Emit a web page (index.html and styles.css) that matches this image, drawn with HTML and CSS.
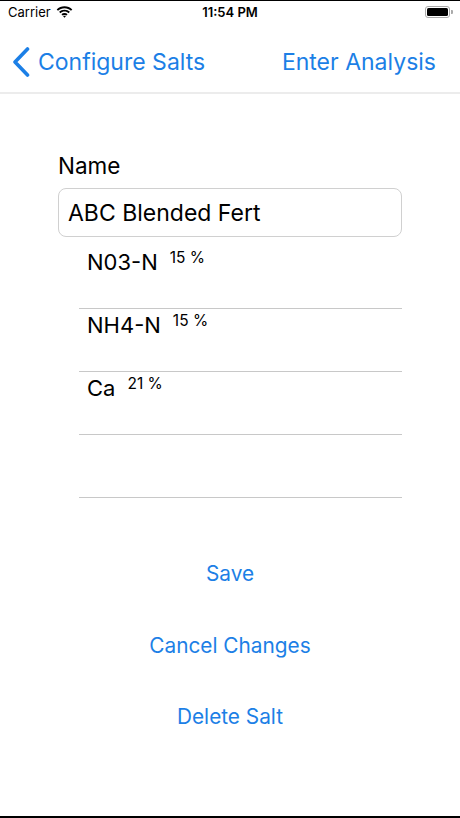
FILE: index.html
```html
<!DOCTYPE html>
<html>
<head>
<meta charset="utf-8">
<link rel="stylesheet" href="styles.css">
</head>
<body>
<div class="screen">
  <div class="status">
    <div class="status-left">
      <span>Carrier</span>
      <svg class="wifi" width="17" height="12" viewBox="0 0 17 12">
        <path d="M8.5 2.2c2.5 0 4.8 1 6.5 2.6l1.3-1.4C14.2 1.4 11.5.2 8.5.2S2.8 1.4.7 3.4L2 4.8C3.7 3.2 6 2.2 8.5 2.2z" fill="#000"/>
        <path d="M8.5 5.6c1.6 0 3 .6 4.1 1.6l1.3-1.4C12.5 4.5 10.6 3.7 8.5 3.7S4.5 4.5 3.1 5.8l1.3 1.4c1.1-1 2.5-1.6 4.1-1.6z" fill="#000"/>
        <path d="M8.5 8.9c.7 0 1.3.3 1.8.7L11.6 8.2c-.8-.8-1.9-1.2-3.1-1.2s-2.3.4-3.1 1.2l1.3 1.4c.5-.4 1.1-.7 1.8-.7zM8.5 11.8l1.4-1.5c-.4-.3-.9-.5-1.4-.5s-1 .2-1.4.5z" fill="#000"/>
      </svg>
    </div>
    <div class="status-time">11:54 PM</div>
    <div class="status-right">
      <div class="battery"><div class="battery-fill"></div></div>
      <div class="battery-cap"></div>
    </div>
  </div>

  <div class="navbar">
    <div class="nav-back">
      <svg class="chevron" width="18" height="30" viewBox="0 0 18 30">
        <path d="M15.5 2 L3 15 L15.5 28" fill="none" stroke="#1c7fe6" stroke-width="3.6" stroke-linecap="round" stroke-linejoin="round"/>
      </svg>
      <span>Configure Salts</span>
    </div>
    <div class="nav-right">Enter Analysis</div>
  </div>

  <div class="content">
    <div class="form">
      <div class="label">Name</div>
      <div class="input">ABC Blended Fert</div>
      <div class="rows">
        <div class="row"><span class="elem">N03-N</span><sup class="pct">15 %</sup></div>
        <div class="row"><span class="elem">NH4-N</span><sup class="pct">15 %</sup></div>
        <div class="row"><span class="elem">Ca</span><sup class="pct">21 %</sup></div>
        <div class="row"></div>
      </div>
    </div>
    <div class="actions">
      <div class="btn">Save</div>
      <div class="btn">Cancel Changes</div>
      <div class="btn">Delete Salt</div>
    </div>
  </div>
</div>
</body>
</html>
```
FILE: styles.css
```css
* { box-sizing: border-box; }
html, body { margin: 0; padding: 0; background: #000; }
body { font-family: Inter, "Liberation Sans", sans-serif; }
.screen {
  width: 460px;
  height: 818px;
  background: #fff;
  border-top: 1px solid #000;
  border-bottom: 2px solid #000;
  display: flex;
  flex-direction: column;
  overflow: hidden;
}
.status {
  height: 22px;
  display: flex;
  align-items: center;
  justify-content: space-between;
  padding: 0 7px 0 8px;
  position: relative;
  font-size: 13px;
  color: #000;
}
.status-left { display: flex; align-items: center; gap: 5px; }
.wifi { margin-top: -1px; }
.status-time {
  position: absolute;
  left: 0; right: 0;
  text-align: center;
  font-weight: 600;
  pointer-events: none;
}
.status-right { display: flex; align-items: center; }
.battery {
  width: 25px;
  height: 12px;
  border: 1px solid #aaa;
  border-radius: 3px;
  padding: 1px;
}
.battery-fill { width: 100%; height: 100%; background: #000; border-radius: 1.5px; }
.battery-cap { width: 2px; height: 4px; background: #aaa; border-radius: 0 1px 1px 0; margin-left: 1px; }

.navbar {
  height: 71px;
  display: flex;
  align-items: center;
  justify-content: space-between;
  padding: 9px 24px 0 12px;
  border-bottom: 2px solid #ececec;
  color: #1c7fe6;
  font-size: 23px;
}
.nav-back { display: flex; align-items: center; gap: 8px; }
.chevron { margin-top: 0; }

.content { flex: 1; display: flex; flex-direction: column; }
.form { padding: 59px 58px 0 58px; }
.label { font-size: 22.5px; color: #000; line-height: 26px; }
.input {
  margin-top: 9px;
  height: 49px;
  border: 1.5px solid #d0d0d0;
  border-radius: 8px;
  padding: 0 9px;
  display: flex;
  align-items: center;
  font-size: 23px;
  color: #000;
}
.rows { margin-left: 21px; margin-top: 9px; }
.row {
  height: 63px;
  border-bottom: 1px solid #c8c8c8;
  padding-left: 8px;
  padding-top: 3px;
  color: #000;
  line-height: 26px;
}
.elem { font-size: 22px; }
.pct { font-size: 15.5px; margin-left: 12px; vertical-align: 7px; line-height: 0; }

.actions {
  margin-top: 40px;
  display: flex;
  flex-direction: column;
  align-items: center;
  gap: 0;
}
.btn {
  height: 71.5px;
  display: flex;
  align-items: center;
  justify-content: center;
  font-size: 20.8px;
  color: #1c7fe6;
}
```
